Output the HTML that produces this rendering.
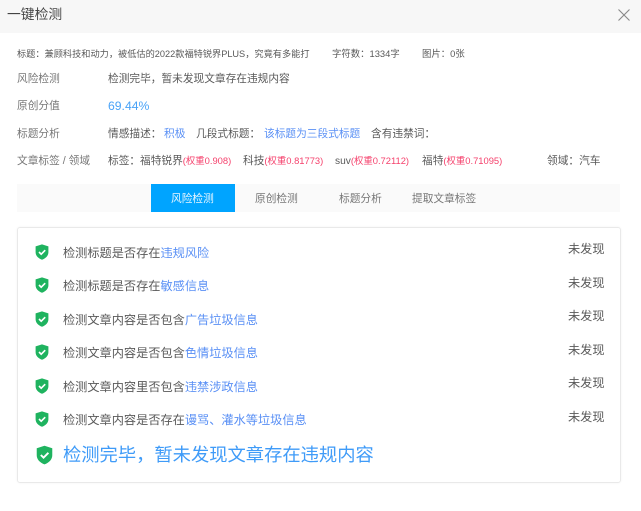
<!DOCTYPE html>
<html><head><meta charset="utf-8">
<style>
html,body{margin:0;padding:0;background:#fff}
#r{position:relative;width:641px;height:511px;overflow:hidden;background:#fff;font-family:"Liberation Sans","Noto Sans CJK SC",sans-serif;color:#595959;filter:blur(.3px)}
.t{position:absolute;white-space:nowrap;line-height:16px;height:16px}
.s{font-size:9.4px}.m{font-size:10.7px}.i{font-size:12.2px}
.b{color:#5a90f5}.w{color:#f5416c;font-size:9.4px}
.ic{position:absolute;width:14px;height:16px;left:34.5px}
.r{left:568px;font-size:12.2px}
</style></head><body><div id="r">
<div style="position:absolute;left:0;top:0;width:641px;height:33px;background:#f7f7f7"></div>
<div class="t" style="left:7px;top:6px;font-size:13.8px;line-height:18px;height:18px;color:#444">一键检测</div>
<svg style="position:absolute;left:617px;top:8px" width="14" height="14" viewBox="0 0 14 14"><path d="M1.5 1.5L12.5 12.5M12.5 1.5L1.5 12.5" stroke="#888" stroke-width="1.1" fill="none"/></svg>

<div class="t s" style="left:17px;top:46px;font-size:9.2px">标题：兼顾科技和动力，被低估的2022款福特锐界PLUS，究竟有多能打</div>
<div class="t s" style="left:332px;top:46px">字符数：1334字</div>
<div class="t s" style="left:422px;top:46px">图片：0张</div>

<div class="t m" style="left:17px;top:71px;color:#777">风险检测</div>
<div class="t m" style="left:108px;top:71px">检测完毕，暂未发现文章存在违规内容</div>

<div class="t m" style="left:17px;top:98px;color:#777">原创分值</div>
<div class="t" style="left:108px;top:98px;font-size:12.2px;color:#4aa3f7">69.44%</div>

<div class="t m" style="left:17px;top:126px;color:#777">标题分析</div>
<div class="t m" style="left:108px;top:126px">情感描述：</div>
<div class="t m b" style="left:164px;top:126px">积极</div>
<div class="t m" style="left:196px;top:126px">几段式标题：</div>
<div class="t m b" style="left:264px;top:126px">该标题为三段式标题</div>
<div class="t m" style="left:371px;top:126px">含有违禁词：</div>

<div class="t m" style="left:17px;top:153px;color:#777">文章标签 / 领域</div>
<div class="t m" style="left:108px;top:153px">标签：</div>
<div class="t m" style="left:140px;top:153px">福特锐界<span class="w">(权重0.908)</span></div>
<div class="t m" style="left:243px;top:153px">科技<span class="w">(权重0.81773)</span></div>
<div class="t" style="left:335px;top:153px;font-size:10.2px">suv<span class="w">(权重0.72112)</span></div>
<div class="t m" style="left:422px;top:153px">福特<span class="w">(权重0.71095)</span></div>
<div class="t m" style="left:547px;top:153px">领域：汽车</div>

<div style="position:absolute;left:17px;top:184px;width:603px;height:28px;background:#fafafa"></div>
<div style="position:absolute;left:151px;top:184px;width:84px;height:28px;background:#00a4ff"></div>
<div class="t m" style="left:171px;top:191px;color:#e8f6ff">风险检测</div>
<div class="t m" style="left:255px;top:191px;color:#777">原创检测</div>
<div class="t m" style="left:339px;top:191px;color:#777">标题分析</div>
<div class="t m" style="left:412px;top:191px;color:#777">提取文章标签</div>

<div style="position:absolute;left:17px;top:227px;width:602px;height:254px;border:1px solid #e9e9e9;border-radius:3px;box-shadow:0 0 2px #f2f2f2"></div>

<svg width="0" height="0" style="position:absolute"><defs><symbol id="sh" viewBox="0 0 14 16"><path d="M7 .4L13.4 2.4V8.2C13.4 11.8 10.6 14.4 7 15.7 3.4 14.4.6 11.8.6 8.2V2.4Z" fill="#1fb35f"/><path d="M4 8L6.2 10.2 10.2 6.2" stroke="#fff" stroke-width="1.6" fill="none"/></symbol></defs></svg>

<svg class="ic" style="top:244px"><use href="#sh"/></svg>
<div class="t i" style="left:63px;top:245px">检测标题是否存在<span class="b">违规风险</span></div>
<div class="t r" style="top:241px">未发现</div>

<svg class="ic" style="top:277px"><use href="#sh"/></svg>
<div class="t i" style="left:63px;top:278px">检测标题是否存在<span class="b">敏感信息</span></div>
<div class="t r" style="top:275px">未发现</div>

<svg class="ic" style="top:311px"><use href="#sh"/></svg>
<div class="t i" style="left:63px;top:312px">检测文章内容是否包含<span class="b">广告垃圾信息</span></div>
<div class="t r" style="top:308px">未发现</div>

<svg class="ic" style="top:344px"><use href="#sh"/></svg>
<div class="t i" style="left:63px;top:345px">检测文章内容是否包含<span class="b">色情垃圾信息</span></div>
<div class="t r" style="top:342px">未发现</div>

<svg class="ic" style="top:378px"><use href="#sh"/></svg>
<div class="t i" style="left:63px;top:379px">检测文章内容里否包含<span class="b">违禁涉政信息</span></div>
<div class="t r" style="top:375px">未发现</div>

<svg class="ic" style="top:411px"><use href="#sh"/></svg>
<div class="t i" style="left:63px;top:412px">检测文章内容是否存在<span class="b">谩骂、灌水等垃圾信息</span></div>
<div class="t r" style="top:409px">未发现</div>

<svg style="position:absolute;left:36px;top:445px" width="17" height="20" viewBox="0 0 14 16"><use href="#sh"/></svg>
<div class="t" style="left:63px;top:444px;font-size:18.3px;line-height:22px;height:22px;color:#3f9bf8">检测完毕，暂未发现文章存在违规内容</div>
</div></body></html>
